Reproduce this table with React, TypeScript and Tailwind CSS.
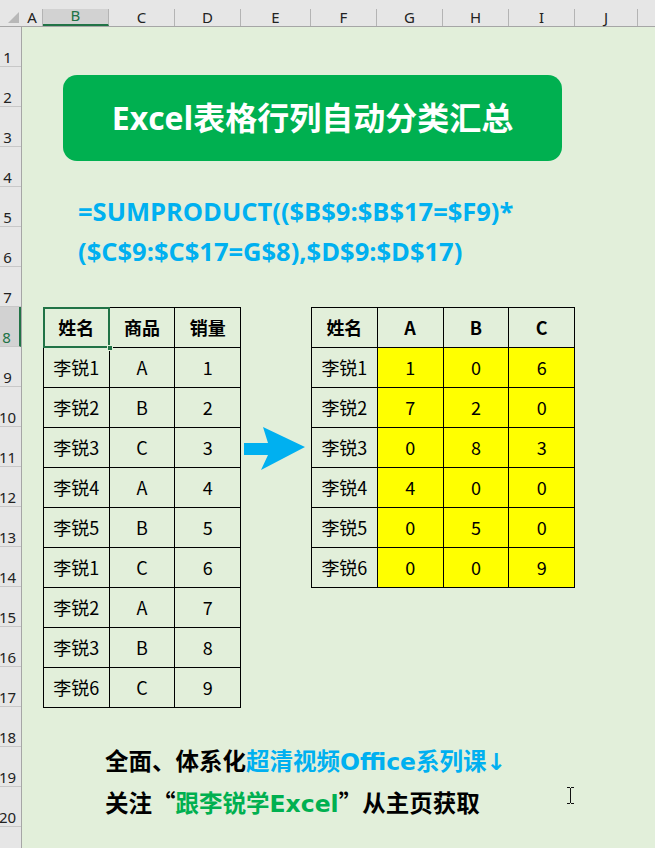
import * as React from "react"

const columns = [
  { id: "A", w: "w-[21px]" },
  { id: "B", w: "w-[66px]" },
  { id: "C", w: "w-[66px]" },
  { id: "D", w: "w-[66px]" },
  { id: "E", w: "w-[70px]" },
  { id: "F", w: "w-[66px]" },
  { id: "G", w: "w-[66px]" },
  { id: "H", w: "w-[66px]" },
  { id: "I", w: "w-[66px]" },
  { id: "J", w: "w-[63px]" },
]

const rowNumbers = Array.from({ length: 21 }, (_, i) => i + 1)

const sales = [
  ["李锐1", "A", "1"],
  ["李锐2", "B", "2"],
  ["李锐3", "C", "3"],
  ["李锐4", "A", "4"],
  ["李锐5", "B", "5"],
  ["李锐1", "C", "6"],
  ["李锐2", "A", "7"],
  ["李锐3", "B", "8"],
  ["李锐6", "C", "9"],
]

const summary = [
  ["李锐1", "1", "0", "6"],
  ["李锐2", "7", "2", "0"],
  ["李锐3", "0", "8", "3"],
  ["李锐4", "4", "0", "0"],
  ["李锐5", "0", "5", "0"],
  ["李锐6", "0", "0", "9"],
]

const uiFont = "font-['Noto_Sans','Liberation_Sans',sans-serif]"
const cellFont = "font-['Noto_Sans_CJK_SC',sans-serif]"
const boldFont = "font-['Open_Sans','Noto_Sans_CJK_SC',sans-serif]"
const promoFont = "font-['DejaVu_Sans','Noto_Sans_CJK_SC',sans-serif]"
const cjkFont = "font-['Noto_Sans_CJK_SC',sans-serif]"

function ColumnHeader() {
  return (
    <div className={`flex h-[27px] shrink-0 border-b border-[#a6a6a6] bg-[#e6e6e6] ${uiFont}`}>
      <div className="flex w-[22px] shrink-0 items-end justify-end pb-[3px] pr-[3px]">
        <svg width="11" height="11" viewBox="0 0 11 11">
          <polygon points="0,11 11,0 11,11" fill="#b8b8b8" />
        </svg>
      </div>
      {columns.map((col) => (
        <div key={col.id} className={`${col.w} shrink-0 pt-[9px]`}>
          <div
            className={`flex h-full items-end justify-center border-r border-[#b4b4b4] pb-[1px] text-[15px] leading-none ${
              col.id === "B" ? "border-b-2 border-b-[#217346] bg-[#d2d2d2] text-[#217346]" : "text-[#222]"
            }`}
          >
            {col.id}
          </div>
        </div>
      ))}
      <div className="flex-1" />
    </div>
  )
}

function RowHeader() {
  return (
    <div className={`flex w-[22px] shrink-0 flex-col border-r border-[#a6a6a6] bg-[#e6e6e6] ${uiFont}`}>
      {rowNumbers.map((n) => (
        <div
          key={n}
          className={`flex h-[40px] shrink-0 items-end justify-center border-b border-[#c8c8c8] pb-[1px] pr-[6px] text-[15px] leading-none ${
            n === 8 ? "border-r-2 border-r-[#217346] bg-[#d2d2d2] text-[#217346]" : "text-[#222]"
          }`}
        >
          {n < 21 ? n : ""}
        </div>
      ))}
    </div>
  )
}

function Cell({ children, head, fill }: { children: React.ReactNode; head?: boolean; fill?: boolean }) {
  return (
    <div
      className={`flex h-[40px] items-center justify-center border-b border-r border-black text-[18px] text-black ${
        head ? "font-bold" : ""
      } ${fill ? "bg-[#ffff00]" : ""}`}
    >
      {children}
    </div>
  )
}

function SalesTable() {
  return (
    <div className={`col-start-2 col-end-5 row-start-8 row-end-18 grid grid-cols-3 self-start border-l border-t border-black ${cellFont}`}>
      <div className="relative">
        <Cell head>姓名</Cell>
        <div className="absolute -left-px -top-px h-[41px] w-[67px] border-2 border-[#217346]" />
        <div className="absolute -bottom-[3px] -right-[3px] h-[6px] w-[6px] border border-[#e2efda] bg-[#217346]" />
      </div>
      <Cell head>商品</Cell>
      <Cell head>销量</Cell>
      {sales.map((row, i) =>
        row.map((v, j) => <Cell key={`${i}-${j}`}>{v}</Cell>)
      )}
    </div>
  )
}

function SummaryTable() {
  return (
    <div className={`col-start-6 col-end-10 row-start-8 row-end-15 grid grid-cols-4 self-start border-l border-t border-black ${cellFont}`}>
      {["姓名", "A", "B", "C"].map((h) => (
        <Cell key={h} head>
          {h}
        </Cell>
      ))}
      {summary.map((row, i) =>
        row.map((v, j) => (
          <Cell key={`${i}-${j}`} fill={j > 0}>
            {v}
          </Cell>
        ))
      )}
    </div>
  )
}

function Arrow() {
  return (
    <div className="col-start-5 row-start-11 flex items-start pl-[3px]">
      <svg width="62" height="44" viewBox="0 0 62 44">
        <polygon points="0,16 24,16 19,0 61,20 17,43 24,28 0,28" fill="#00b0f0" />
      </svg>
    </div>
  )
}

function Cursor() {
  return (
    <svg className="absolute left-[544px] top-[760px]" width="9" height="17" viewBox="0 0 9 17">
      <path d="M1 0.5h3M5 0.5h3M4.5 1v15M1 16.5h3M5 16.5h3" stroke="#111" strokeWidth="1" fill="none" />
    </svg>
  )
}

export default function App() {
  return (
    <div className="flex h-[848px] w-[655px] flex-col overflow-hidden bg-[#e2efda]">
      <ColumnHeader />
      <div className="flex min-h-0 flex-1">
        <RowHeader />
        <div className="relative grid flex-1 grid-cols-[21px_66px_66px_66px_70px_66px_66px_66px_66px_63px_1fr] grid-rows-[repeat(20,40px)_1fr]">
          <div
            className={`col-start-2 col-end-10 row-start-2 row-end-4 ml-[20px] mr-[13px] mt-[8px] flex h-[86px] items-center justify-center rounded-[14px] bg-[#00b050] text-[32px] font-bold text-white ${boldFont}`}
          >
            Excel表格行列自动分类汇总
          </div>

          <div className={`col-start-2 col-end-12 row-start-5 ml-[35px] self-end text-[25.5px] font-bold leading-[32px] text-[#00b0f0] ${boldFont}`}>
            =SUMPRODUCT(($B$9:$B$17=$F9)*
          </div>
          <div className={`col-start-2 col-end-12 row-start-6 ml-[35px] self-end text-[25.5px] font-bold leading-[32px] text-[#00b0f0] ${boldFont}`}>
            ($C$9:$C$17=G$8),$D$9:$D$17)
          </div>

          <SalesTable />
          <Arrow />
          <SummaryTable />

          <div className={`col-start-2 col-end-12 row-start-19 ml-[62px] self-center pb-[8px] text-[23.5px] font-bold leading-none text-black ${promoFont}`}>
            全面、体系化<span className="text-[#00b0f0]">超清视频Office系列课↓</span>
          </div>
          <div className={`col-start-2 col-end-12 row-start-20 ml-[62px] self-center pb-[6px] text-[23.5px] font-bold leading-none text-black ${promoFont}`}>
            关注<span className={cjkFont}>“</span>
            <span className="text-[#00b050]">跟李锐学Excel</span>
            <span className={cjkFont}>”</span>从主页获取
          </div>

          <Cursor />
        </div>
      </div>
    </div>
  )
}
